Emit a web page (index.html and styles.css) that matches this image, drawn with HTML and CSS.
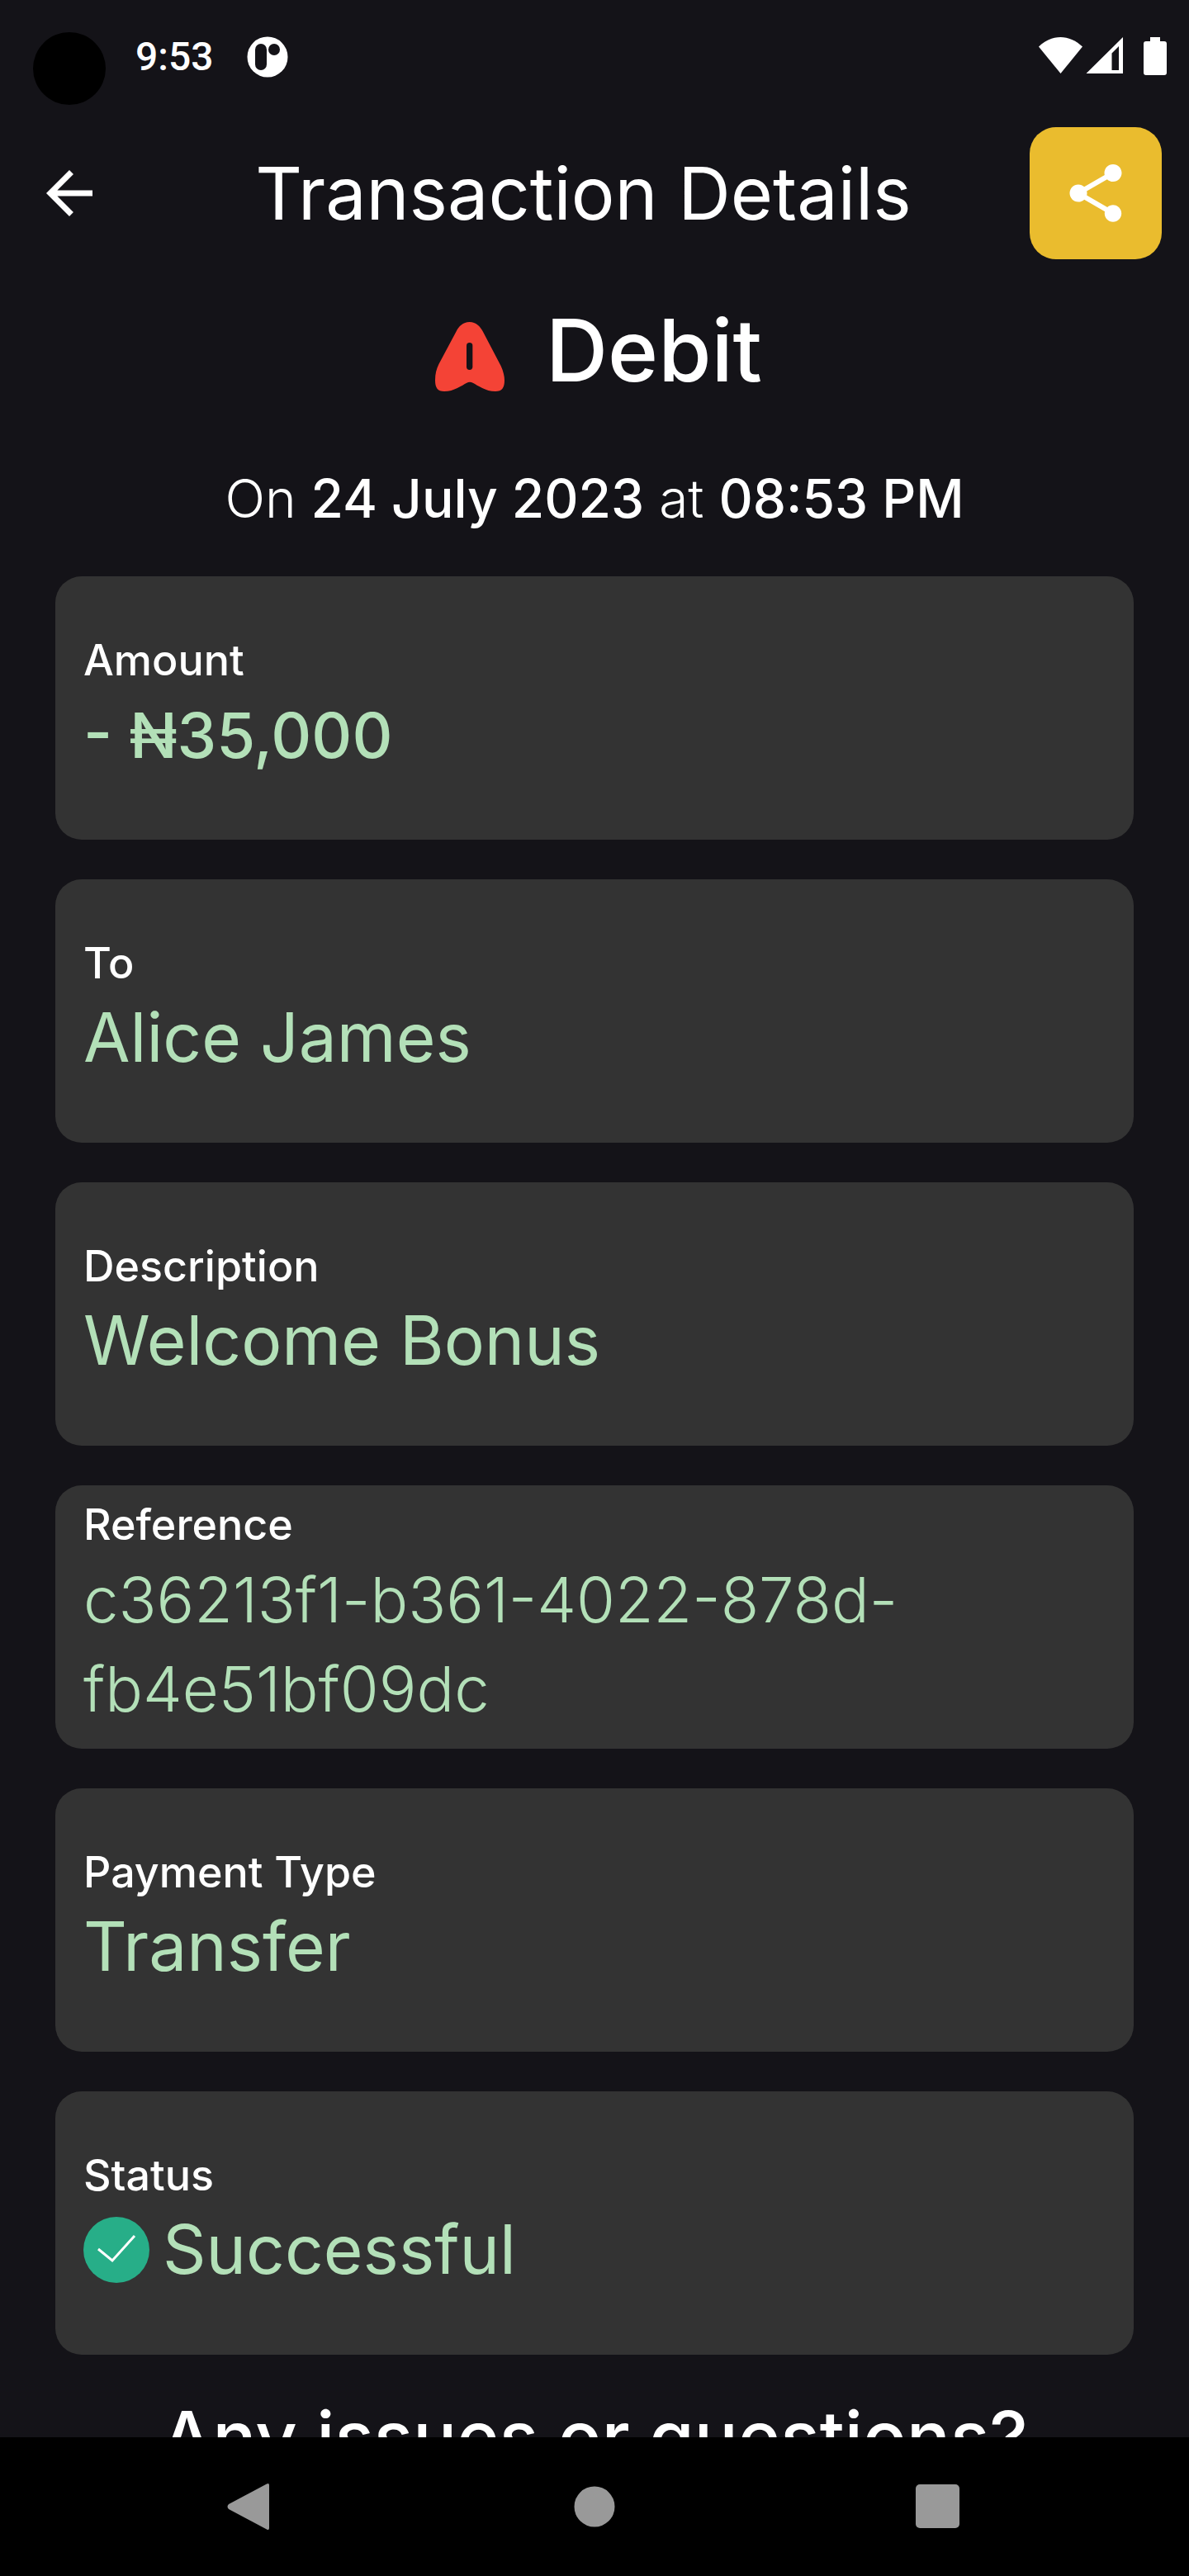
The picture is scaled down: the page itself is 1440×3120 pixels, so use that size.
FILE: index.html
```html
<!DOCTYPE html>
<html lang="en">
<head>
<meta charset="utf-8">
<meta name="viewport" content="width=device-width, initial-scale=1">
<title>Transaction Details</title>
<link rel="stylesheet" href="styles.css">
</head>
<body>
<div class="status-bar">
  <span class="camera"></span>
  <span class="clock">9:53</span>
  <svg class="app-badge" viewBox="0 0 50 50" aria-hidden="true">
    <circle cx="25" cy="25" r="24.5" fill="#fff"/>
    <rect x="10" y="9" width="14" height="32" rx="7" fill="#141318"/>
    <circle cx="33" cy="16" r="7" fill="#141318"/>
  </svg>
  <svg class="signals" viewBox="0 0 156 48" aria-hidden="true" fill="#fff">
    <path d="M0 12.500C16-3 37-3 53 12.500L26.500 45Z"/>
    <path fill-rule="evenodd" d="M57.500 45L102 1V45ZM88.500 20.500V41H97V12Z"/>
    <path d="M135 1h12v5h5a3 3 0 0 1 3 3v35a3 3 0 0 1-3 3h-22a3 3 0 0 1-3-3V9a3 3 0 0 1 3-3h5Z"/>
  </svg>
</div>

<header class="app-bar">
  <button class="back" type="button" aria-label="Back">
    <svg class="icon" viewBox="0 0 24 24" fill="#fff"><path d="M20 11H7.830l5.590-5.590L12 4l-8 8 8 8 1.410-1.410L7.830 13H20z"/></svg>
  </button>
  <h1 class="title">Transaction Details</h1>
  <button class="share" type="button" aria-label="Share">
    <svg class="icon" viewBox="0 0 24 24" fill="#fff"><path d="M18 16.080c-.76 0-1.440.3-1.960.77L8.910 12.700c.05-.23.09-.46.09-.7s-.04-.47-.09-.7l7.050-4.110c.54.5 1.250.81 2.040.81 1.660 0 3-1.340 3-3s-1.340-3-3-3-3 1.340-3 3c0 .24.04.47.09.7L8.040 9.810C7.500 9.310 6.790 9 6 9c-1.660 0-3 1.340-3 3s1.340 3 3 3c.79 0 1.500-.31 2.040-.81l7.120 4.160c-.05.21-.08.43-.08.65 0 1.610 1.310 2.920 2.920 2.920s2.920-1.310 2.920-2.920-1.310-2.920-2.920-2.920z"/></svg>
  </button>
</header>

<main class="content">
  <div class="kind">
    <svg class="kind-icon" viewBox="69 30 312 312" aria-hidden="true">
      <path fill="#f44336" d="M224 60C200 60 185 76 176 94L112 214C104 230 99 248 99 272C99 298 108 312 132 312C168 312 196 290 214 281Q225 276 236 281C254 290 282 312 318 312C342 312 351 298 351 272C351 258 347 240 338 220L272 94C262 76 248 60 224 60Z"/>
      <rect x="213" y="135" width="22" height="99" rx="11" fill="#141318"/>
    </svg>
    <h2 class="kind-name">Debit</h2>
  </div>
  <p class="date">On <b>24 July 2023</b> at <b>08:53 PM</b></p>

  <dl class="cards">
    <div class="card"><dt>Amount</dt><dd class="amount">- ₦35,000</dd></div>
    <div class="card"><dt>To</dt><dd>Alice James</dd></div>
    <div class="card"><dt>Description</dt><dd>Welcome Bonus</dd></div>
    <div class="card"><dt>Reference</dt><dd class="code">c36213f1-b361-4022-878d-fb4e51bf09dc</dd></div>
    <div class="card"><dt>Payment Type</dt><dd>Transfer</dd></div>
    <div class="card"><dt>Status</dt><dd class="with-icon">
      <svg class="check" viewBox="0 0 80 80" aria-hidden="true"><circle cx="40" cy="40" r="40" fill="#27ae88"/><path d="M18 39L35 53L62 23" fill="none" stroke="#fff" stroke-width="3"/></svg>
      Successful</dd></div>
  </dl>
  <p class="help">Any issues or questions?</p>
</main>

<nav class="nav-bar" aria-label="System">
  <button type="button" aria-label="Back"><svg viewBox="0 0 60 60" fill="#999"><path d="M3 27L49 2.500Q52 1 52 4V56Q52 59 49 57.500L3 33Q0 30 3 27Z"/></svg></button>
  <button type="button" aria-label="Home"><svg viewBox="0 0 60 60" fill="#999"><circle cx="30" cy="30" r="24.500"/></svg></button>
  <button type="button" aria-label="Recents"><svg viewBox="0 0 60 60" fill="#999"><rect x="3" y="3" width="53" height="53" rx="5"/></svg></button>
</nav>
</body>
</html>
```
FILE: styles.css
```css
* { box-sizing: border-box; }

body {
  margin: 0;
  height: 100vh;
  display: flex;
  flex-direction: column;
  overflow: hidden;
  background: #141318;
  color: #fff;
  font-family: "Inter", "Liberation Sans", sans-serif;
  font-weight: 300;
}

h1, h2, p, dl, dt, dd { margin: 0; }
h1, h2, dt, b { font-weight: 500; }

button {
  display: flex;
  align-items: center;
  justify-content: center;
  padding: 0;
  border: 0;
  background: none;
}

.icon { width: 84px; height: 84px; }

.status-bar {
  flex: none;
  display: flex;
  align-items: flex-start;
  height: 134px;
  padding: 39px 26px 0 40px;
}

.camera {
  width: 88px;
  height: 88px;
  border-radius: 50%;
  background: #000;
}

.clock {
  margin: 0 40px 0 36px;
  font: 500 48px/60px Roboto, sans-serif;
}

.app-badge { width: 50px; height: 50px; margin-top: 5px; }
.signals { width: 156px; height: 48px; margin: 5px 0 0 auto; }

.app-bar {
  flex: none;
  display: flex;
  align-items: center;
  padding: 20px 33px 20px 42px;
}

.back { width: 84px; height: 84px; }

.title {
  flex: 1;
  padding-left: 40px;
  font-size: 88px;
  line-height: 104px;
  font-weight: 400;
  text-align: center;
}

.share {
  width: 160px;
  height: 160px;
  border-radius: 32px;
  background: #eabc2e;
}

.content {
  flex: 1;
  min-height: 0;
  overflow: hidden;
  padding: 30px 67px 0;
}

.kind {
  display: flex;
  align-items: flex-end;
  justify-content: center;
  gap: 40px;
}

.kind-icon { width: 104px; height: 104px; }
.kind-name { font-size: 104px; line-height: 120px; }

.date {
  margin: 80px 0 54px;
  font-size: 64px;
  line-height: 80px;
  text-align: center;
}

.cards {
  display: flex;
  flex-direction: column;
  gap: 48px;
}

.card {
  display: flex;
  flex-direction: column;
  justify-content: center;
  gap: 8px;
  min-height: 319px;
  padding: 0 34px;
  border-radius: 32px;
  background: #333;
}

.card dt { font-size: 52px; line-height: 56px; }

.card dd {
  color: #b3e0b8;
  font-size: 82px;
  line-height: 108px;
  font-weight: 400;
}

.card .amount { font-size: 76px; font-weight: 500; }
.card .code { font-size: 76px; font-weight: 300; }

.with-icon {
  display: flex;
  align-items: center;
  gap: 16px;
}

.check { width: 80px; height: 80px; }

.help {
  margin-top: 48px;
  font-size: 88px;
  line-height: 104px;
  font-weight: 500;
  text-align: center;
}

.nav-bar {
  flex: none;
  display: flex;
  height: 168px;
  padding: 0 96px;
  background: #000;
}

.nav-bar button { flex: 1; }
.nav-bar svg { width: 60px; height: 60px; }
```
